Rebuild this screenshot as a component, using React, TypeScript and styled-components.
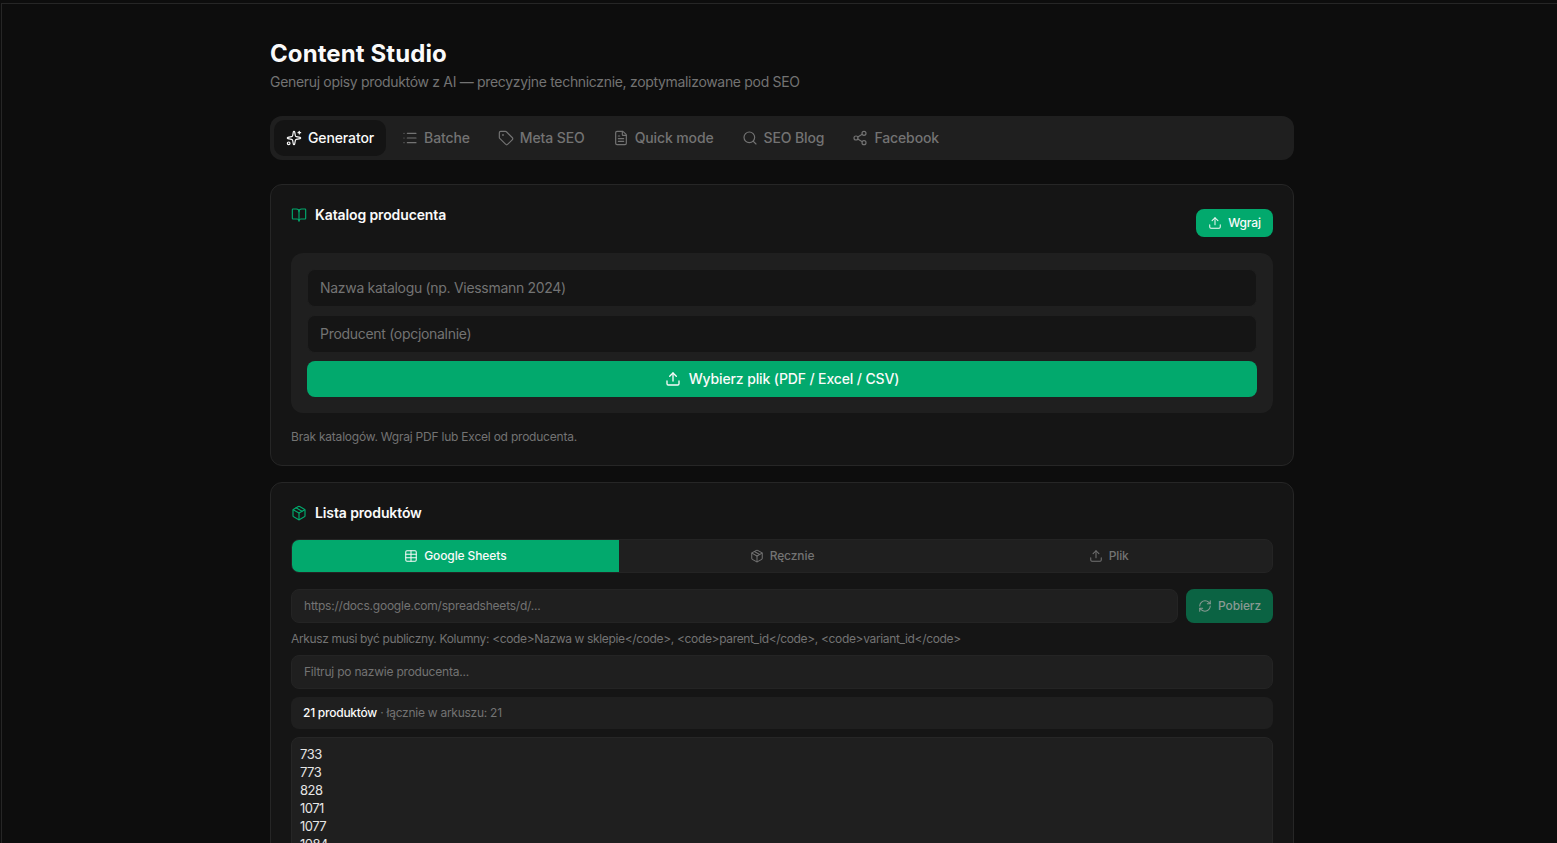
import styled, { createGlobalStyle } from 'styled-components';
import {
  BookOpen,
  FileText,
  List,
  Package,
  RefreshCw,
  Search,
  Share2,
  Sparkles,
  Table,
  Tag,
  Upload,
} from 'lucide-react';
import type { LucideIcon } from 'lucide-react';

const GlobalStyle = createGlobalStyle`
  * { box-sizing: border-box; }
  html, body {
    margin: 0;
    height: 100%;
    overflow: hidden;
    background: #0d0d0d;
    color: #fafafa;
    font-family: Inter, "Liberation Sans", sans-serif;
  }
  input, textarea, button { font-family: inherit; }
`

const Frame = styled.div`
  height: 840px;
  margin: 3px 0 0 1px;
  padding-left: 5px;
  border-top: 1px solid #262626;
  border-left: 1px solid #262626;
  overflow: hidden;
`
const Page = styled.main`
  width: 1024px;
  margin: 0 auto;
  padding-top: 34px;
`
const Header = styled.header`
  margin-bottom: 24px;
`
const Title = styled.h1`
  margin: 0;
  font-size: 24px;
  line-height: 32px;
  font-weight: 700;
  letter-spacing: 0.1px;
`
const Subtitle = styled.p`
  margin: 2px 0 0;
  font-size: 14px;
  line-height: 20px;
  letter-spacing: -0.32px;
  color: #737373;
`
// the text sits a pixel above the icons next to it
const Label = styled.span`
  margin-bottom: 2px;
`
const TabBar = styled.nav`
  display: flex;
  gap: 4px;
  height: 44px;
  padding: 4px;
  margin-bottom: 24px;
  background: #1f1f1f;
  border-radius: 12px;
`
const Tab = styled.button<{ $active?: boolean }>`
  display: flex;
  align-items: center;
  gap: 6px;
  padding: 0 12px;
  border: 0;
  border-radius: 10px;
  font-size: 14px;
  font-weight: 500;
  letter-spacing: -0.12px;
  background: ${props => (props.$active ? '#141414' : 'transparent')};
  color: ${props => (props.$active ? '#fafafa' : '#737373')};
`
const Card = styled.section`
  background: #151515;
  border: 1px solid #262626;
  border-radius: 12px;
  padding: 20px;
  margin-bottom: 16px;
`
const CardHead = styled.div`
  display: flex;
  justify-content: space-between;
  align-items: flex-start;
`
const CardTitle = styled.h2`
  display: flex;
  align-items: center;
  gap: 8px;
  margin: 0;
  font-size: 14px;
  line-height: 20px;
  font-weight: 600;
  letter-spacing: -0.12px;
  svg {
    color: #02a96d;
  }
`
const SmallButton = styled.button`
  display: flex;
  align-items: center;
  gap: 6px;
  height: 28px;
  margin-top: 4px;
  padding: 0 12px;
  border: 0;
  border-radius: 8px;
  background: #02a96d;
  color: #fafafa;
  font-size: 12px;
  font-weight: 500;
  letter-spacing: -0.1px;
`
const UploadPanel = styled.div`
  display: flex;
  flex-direction: column;
  gap: 8px;
  margin-top: 16px;
  padding: 16px;
  background: #1f1f1f;
  border-radius: 12px;
`
const PanelInput = styled.input`
  height: 38px;
  padding: 0 12px 2px;
  background: #151515;
  border: 1px solid #1f1f1f;
  border-radius: 8px;
  color: #fafafa;
  font-size: 14px;
  letter-spacing: -0.3px;
  &::placeholder {
    color: #737373;
    opacity: 1;
  }
`
const WideButton = styled.button`
  display: flex;
  justify-content: center;
  align-items: center;
  gap: 8px;
  height: 36px;
  border: 0;
  border-radius: 8px;
  background: #02a96d;
  color: #fafafa;
  font-size: 14px;
  font-weight: 500;
  letter-spacing: -0.13px;
`
const Note = styled.p`
  margin: 16px 0 0;
  font-size: 12px;
  line-height: 16px;
  letter-spacing: -0.22px;
  color: #737373;
`
const SourceTabs = styled.div`
  display: grid;
  grid-template-columns: repeat(3, 1fr);
  height: 34px;
  margin-top: 16px;
  background: #1f1f1f;
  border: 1px solid #242424;
  border-radius: 8px;
  overflow: hidden;
`
const SourceTab = styled.button<{ $active?: boolean }>`
  display: flex;
  justify-content: center;
  align-items: center;
  gap: 6px;
  border: 0;
  font-size: 12px;
  font-weight: 500;
  letter-spacing: -0.1px;
  background: ${props => (props.$active ? '#02a96d' : 'transparent')};
  color: ${props => (props.$active ? '#fafafa' : '#737373')};
`
const SheetRow = styled.div`
  display: flex;
  gap: 8px;
  margin-top: 16px;
`
const FieldInput = styled.input`
  flex: 1;
  display: block;
  width: 100%;
  height: 34px;
  padding: 0 12px 2px;
  background: #1f1f1f;
  border: 1px solid #242424;
  border-radius: 8px;
  color: #fafafa;
  font-size: 12px;
  letter-spacing: -0.22px;
  &::placeholder {
    color: #737373;
    opacity: 1;
  }
`
const FetchButton = styled.button`
  display: flex;
  align-items: center;
  gap: 6px;
  height: 34px;
  padding: 0 12px;
  border: 0;
  border-radius: 8px;
  background: #0b6343;
  color: #8a9a93;
  font-size: 12px;
  font-weight: 500;
  letter-spacing: -0.1px;
`
const Hint = styled.p`
  margin: 8px 0;
  font-size: 12px;
  line-height: 16px;
  letter-spacing: -0.35px;
  color: #737373;
`
const StatBar = styled.div`
  height: 32px;
  margin-top: 8px;
  padding: 0 12px;
  background: #1f1f1f;
  border-radius: 8px;
  font-size: 12px;
  line-height: 32px;
  letter-spacing: -0.26px;
  color: #737373;
  strong {
    font-weight: 500;
    letter-spacing: -0.24px;
    color: #fafafa;
  }
`
const IdsArea = styled.textarea`
  display: block;
  width: 100%;
  height: 240px;
  margin-top: 8px;
  padding: 7px 8px;
  background: #1f1f1f;
  border: 1px solid #262626;
  border-radius: 8px;
  color: #e5e5e5;
  font-size: 13px;
  line-height: 18px;
  letter-spacing: -0.5px;
  resize: none;
  outline: none;
`

interface ITab {
  label: string;
  icon: LucideIcon;
}

const tabs: ITab[] = [
  { label: 'Generator', icon: Sparkles },
  { label: 'Batche', icon: List },
  { label: 'Meta SEO', icon: Tag },
  { label: 'Quick mode', icon: FileText },
  { label: 'SEO Blog', icon: Search },
  { label: 'Facebook', icon: Share2 },
];

const productIds = ['733', '773', '828', '1071', '1077', '1084', '1090', '1102', '1118', '1124', '1130', '1141'];

function App() {
  return (
    <>
      <GlobalStyle />
      <Frame>
        <Page>
          <Header>
            <Title>Content Studio</Title>
            <Subtitle>Generuj opisy produktów z AI — precyzyjne technicznie, zoptymalizowane pod SEO</Subtitle>
          </Header>
          <TabBar>
            {tabs.map((tab, i) => (
              <Tab key={tab.label} $active={i === 0}>
                <tab.icon size={16} strokeWidth={1.75} />
                <Label>{tab.label}</Label>
              </Tab>
            ))}
          </TabBar>

          <Card>
            <CardHead>
              <CardTitle>
                <BookOpen size={16} strokeWidth={1.75} />
                Katalog producenta
              </CardTitle>
              <SmallButton>
                <Upload size={14} strokeWidth={1.75} />
                <Label>Wgraj</Label>
              </SmallButton>
            </CardHead>
            <UploadPanel>
              <PanelInput placeholder="Nazwa katalogu (np. Viessmann 2024)" />
              <PanelInput placeholder="Producent (opcjonalnie)" />
              <WideButton>
                <Upload size={16} strokeWidth={2} />
                <Label>Wybierz plik (PDF / Excel / CSV)</Label>
              </WideButton>
            </UploadPanel>
            <Note>Brak katalogów. Wgraj PDF lub Excel od producenta.</Note>
          </Card>

          <Card>
            <CardTitle>
              <Package size={16} strokeWidth={1.75} />
              Lista produktów
            </CardTitle>
            <SourceTabs>
              <SourceTab $active>
                <Table size={14} strokeWidth={1.75} />
                <Label>Google Sheets</Label>
              </SourceTab>
              <SourceTab>
                <Package size={14} strokeWidth={1.75} />
                <Label>Ręcznie</Label>
              </SourceTab>
              <SourceTab>
                <Upload size={14} strokeWidth={1.75} />
                <Label>Plik</Label>
              </SourceTab>
            </SourceTabs>
            <SheetRow>
              <FieldInput placeholder="https://docs.google.com/spreadsheets/d/..." />
              <FetchButton>
                <RefreshCw size={14} strokeWidth={1.75} />
                <Label>Pobierz</Label>
              </FetchButton>
            </SheetRow>
            <Hint>
              Arkusz musi być publiczny. Kolumny: {'<code>'}Nazwa w sklepie{'</code>'}, {'<code>'}parent_id{'</code>'}, {'<code>'}variant_id{'</code>'}
            </Hint>
            <FieldInput placeholder="Filtruj po nazwie producenta..." />
            <StatBar>
              <strong>21 produktów</strong> · łącznie w arkuszu: 21
            </StatBar>
            <IdsArea readOnly value={productIds.join('\n')} />
          </Card>
        </Page>
      </Frame>
    </>
  )
}

export default App;
